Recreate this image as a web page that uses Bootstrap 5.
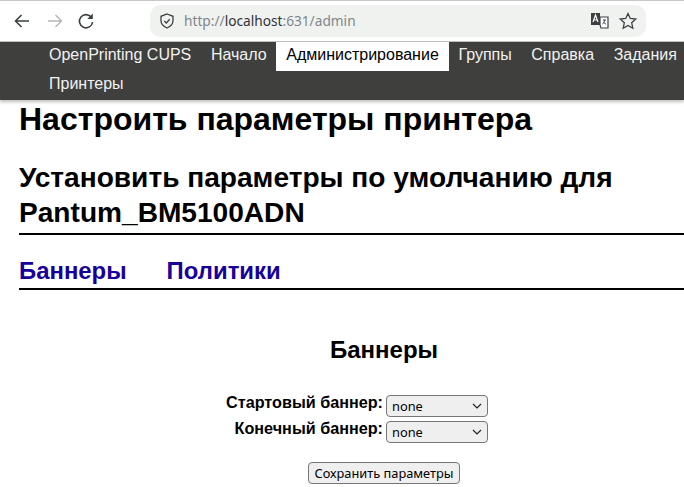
<!DOCTYPE html>
<html lang="ru">
<head>
<meta charset="UTF-8" />
<title>Настроить параметры принтера</title>
<link href="https://cdn.jsdelivr.net/npm/bootstrap@5.3.0/dist/css/bootstrap.min.css" rel="stylesheet" />
<style>
html, body { height: 487px; overflow: hidden; }
body { background: #fff; font-family: "Liberation Sans", Arial, sans-serif; color: #000; }
.browser-bar { height: 42px; background: #fff; border-top: 1px solid #c8c8c8; border-bottom: 1px solid #c0c0c0; padding-left: 9px; }
.tool-btn { width: 26px; height: 26px; margin-right: 6px; flex: none; }
.address-box { width: 496px; height: 32px; margin-left: 45px; margin-top: -1px; background: #f0f2ef; border-radius: 11px; padding: 0 8px; font: 13.7px "Noto Sans", "Open Sans", sans-serif; color: #80868b; }
.address-box b { font-weight: 400; color: #30343a; }
.cups-menu { background: #3f3f3d; height: 58px; padding-left: 39.2px; font-size: 16px; line-height: 25px; box-shadow: 0 2px 3px rgba(0,0,0,.25); position: relative; overflow: hidden; }
.menu-line { height: 29px; }
.cups-menu a { color: #f2f2f2; text-decoration: none; padding: 0 9.8px; display: block; height: 29px; white-space: nowrap; }
.cups-menu a.active { background: #fff; color: #000; }
.cups-page { padding: 0 0 0 19px; width: 684px; }
.cups-page h1 { font-size: 32px; font-weight: 700; line-height: 37px; margin: 1px 0 0; }
.cups-page h2.sub-title { font-size: 28.1px; font-weight: 700; line-height: 35px; margin: 22px 0 0; padding-bottom: 3px; border-bottom: 2px solid #000; width: 665px; }
.tab-row { gap: 40px; border-bottom: 2px solid #000; width: 665px; height: 33px; margin-top: 22px; font-size: 23.9px; line-height: 28px; font-weight: 700; }
.tab-row a { color: #17009a; text-decoration: none; }
.banner-title { font-size: 24px; font-weight: 700; line-height: 28px; margin: 46px 0 0; padding-left: 311px; }
.field-grid { display: grid; grid-template-columns: 364px 102px; column-gap: 3px; row-gap: 2px; margin-top: 29px; }
.field-grid label { font-size: 16.2px; font-weight: 700; line-height: 18px; text-align: right; white-space: nowrap; }
.native-select { appearance: none; width: 102px; height: 22px; margin-top: 2px; padding: 0 0 0 5px; border: 1px solid #767676; border-radius: 4px; background: #efefef url("data:image/svg+xml,%3Csvg xmlns='http://www.w3.org/2000/svg' width='10' height='6' fill='none' stroke='%23222' stroke-width='1.200'%3E%3Cpath d='M1 1l4 4 4-4'/%3E%3C/svg%3E") no-repeat right 5px center; font: 12.8px "Noto Sans", sans-serif; color: #000; }
.save-btn { display: block; margin: 19px 0 0 289px; height: 22px; width: 152px; border: 1px solid #767676; border-radius: 4px; background: #efefef; font: 12.8px "Noto Sans", sans-serif; padding: 0; color: #000; white-space: nowrap; }
</style>
</head>
<body>
<div class="browser-bar d-flex align-items-center">
  <svg class="tool-btn" viewBox="0 0 26 26" fill="none" stroke="#3c4043" stroke-width="1.600"><path d="M20 13H6.500M12.500 7l-6 6 6 6"/></svg>
  <svg class="tool-btn" viewBox="0 0 26 26" fill="none" stroke="#b4b6b8" stroke-width="1.400"><path d="M7 13h13.500M14.500 7l6 6-6 6"/></svg>
  <svg class="tool-btn" viewBox="0 0 26 26" fill="none" stroke="#3c4043" stroke-width="1.600"><path d="M18.500 9.500a6.600 6.600 0 1 0 1.100 4.500"/><path d="M19.800 5.500v5.500h-5.500z" fill="#3c4043" stroke="none"/></svg>
  <div class="address-box d-flex align-items-center">
    <svg width="18" height="18" viewBox="0 0 18 18" fill="none" stroke="#3c4043" stroke-width="1.300" class="me-2"><path d="M9 2l6 2.300v4.200c0 3.600-2.500 6-6 7.500-3.500-1.500-6-3.900-6-7.500V4.300z"/><path d="M6.300 9l2 2 3.400-3.700"/></svg>
    <span>http://<b>localhost</b>:631/admin</span>
    <svg class="ms-auto" width="20" height="18" viewBox="0 0 20 18"><path d="M1 1h9v12H1z" fill="#3c4043"/><path d="M10 5h8v11h-7l-1-3z" fill="#fff" stroke="#3c4043" stroke-width="1.200"/><path d="M13 8h3M14.500 8c0 2-1 3.500-2 4M13.500 10c.5 1 1.500 2 2.500 2" fill="none" stroke="#3c4043"/><path d="M3 10l2.500-7L8 10M4 8h3" fill="none" stroke="#fff" stroke-width="1.200"/></svg>
    <svg class="ms-2" width="20" height="20" viewBox="0 0 20 20" fill="none" stroke="#3c4043" stroke-width="1.300"><path d="M10 2.500l2.300 5 5.400.6-4 3.700 1.100 5.400-4.800-2.700-4.800 2.700 1.100-5.400-4-3.700 5.400-.6z"/></svg>
  </div>
</div>
<nav class="cups-menu">
  <div class="menu-line d-flex">
    <a href="#">OpenPrinting CUPS</a>
    <a href="#">Начало</a>
    <a href="#" class="active">Администрирование</a>
    <a href="#">Группы</a>
    <a href="#">Справка</a>
    <a href="#">Задания</a>
  </div>
  <div class="menu-line d-flex">
    <a href="#">Принтеры</a>
  </div>
</nav>
<main class="cups-page">
  <h1>Настроить параметры принтера</h1>
  <h2 class="sub-title">Установить параметры по умолчанию для<br>Pantum_BM5100ADN</h2>
  <div class="tab-row d-flex">
    <a href="#">Баннеры</a>
    <a href="#">Политики</a>
  </div>
  <h3 class="banner-title">Баннеры</h3>
  <form>
    <div class="field-grid">
      <label for="bannerStart">Стартовый баннер:</label>
      <select id="bannerStart" class="native-select"><option>none</option></select>
      <label for="bannerEnd">Конечный баннер:</label>
      <select id="bannerEnd" class="native-select"><option>none</option></select>
    </div>
    <button type="button" class="save-btn">Сохранить параметры</button>
  </form>
</main>
<script src="https://cdn.jsdelivr.net/npm/bootstrap@5.3.0/dist/js/bootstrap.bundle.min.js"></script>
</body>
</html>
